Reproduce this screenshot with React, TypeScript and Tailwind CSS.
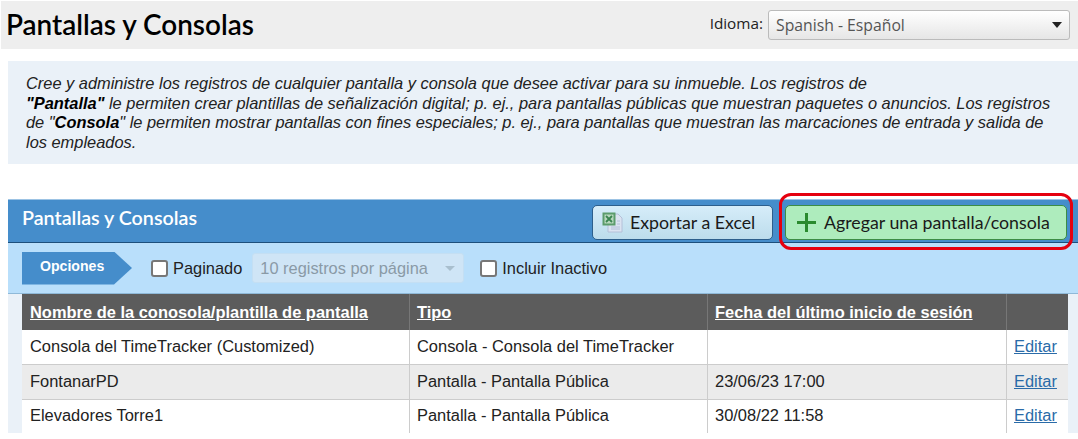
import React from 'react';

const rows = [
   { name: 'Consola del TimeTracker (Customized)', type: 'Consola - Consola del TimeTracker', date: '', h: 'h-[35px] border-b', bg: 'bg-white' },
   { name: 'FontanarPD', type: 'Pantalla - Pantalla Pública', date: '23/06/23 17:00', h: 'h-[35px] border-b', bg: 'bg-[#ebebeb]' },
   { name: 'Elevadores Torre1', type: 'Pantalla - Pantalla Pública', date: '30/08/22 11:58', h: 'h-[33px]', bg: 'bg-white' },
];

const ExcelIcon = () => (
   <svg width="21" height="22" viewBox="0 0 21 22">
      <path d="M6 3h10l4 4v14H6z" fill="#dbe3f1" stroke="#b4c0d8" />
      <path d="M0.5 1.5h13v13h-13z" fill="#5c9c6c" />
      <path d="M2.5 3.5h9v9h-9z" fill="#b9d8bf" />
      <path d="M4 5l6 6M10 5l-6 6" stroke="#3a8550" strokeWidth="1.8" />
      <path d="M15 10h3M15 13h3M9 16h9M9 18h9" stroke="#b4c0d8" />
   </svg>
);

const App = () => {
   return (
      <div className="relative w-[1078px] h-[439px] overflow-hidden bg-white pt-px font-['Liberation_Sans',sans-serif] text-black">
         <div className="ml-px flex items-center justify-between h-[48px] bg-[#eeeeee] pl-[5px] pr-[8px]">
            <h1 className="font-['Lato',sans-serif] font-semibold text-[27.9px] leading-none text-black">Pantallas y Consolas</h1>
            <div className="flex items-center gap-[5px]">
               <span className="font-['Open_Sans',sans-serif] text-[15.3px] text-[#222] -mt-[3px]">Idioma:</span>
               <div className="flex items-center justify-between w-[302px] h-[30px] pl-[7px] pr-[7px] rounded-[3px] border border-[#bbbbbb] bg-gradient-to-b from-white to-[#e6e6e6]">
                  <span className="font-['Open_Sans',sans-serif] text-[15.75px] text-[#555] mt-[2px]">Spanish - Español</span>
                  <span className="w-0 h-0 border-x-[5px] border-x-transparent border-t-[6px] border-t-[#222]" />
               </div>
            </div>
         </div>

         <div className="ml-[8px] mt-[12px] h-[103px] bg-[#eaf1f8] pl-[18px] pr-[20px] pt-[13px] italic text-[16.4px] leading-[19.5px] text-[#222]">
            Cree y administre los registros de cualquier pantalla y consola que desee activar para su inmueble. Los registros de
            <br />
            <b className="text-black">"Pantalla"</b> le permiten crear plantillas de señalización digital; p. ej., para pantallas públicas que muestran paquetes o anuncios. Los registros
            <br />
            de "<b className="text-black">Consola</b>" le permiten mostrar pantallas con fines especiales; p. ej., para pantallas que muestran las marcaciones de entrada y salida de
            <br />
            los empleados.
         </div>

         <div className="ml-[8px] mt-[35px]">
            <div className="flex items-center justify-between h-[44px] bg-[#458dcb] border-t border-[#9cc3e4] border-b border-b-[#1c4f7c] pl-[14px] pr-[11px]">
               <h2 className="font-['Lato',sans-serif] font-semibold text-[19.7px] text-white -mt-[6px]">Pantallas y Consolas</h2>
               <div className="flex items-center gap-[12px] mt-[2px] font-['Lato',sans-serif] text-[17.75px] text-[#1a1a1a]">
                  <button className="flex items-center gap-[7px] w-[181px] h-[35px] pl-[9px] rounded-[5px] border border-[#2d5f8c] bg-gradient-to-b from-[#d6edf9] to-[#bcdcec]">
                     <ExcelIcon />
                     Exportar a Excel
                  </button>
                  <button className="flex items-center gap-[8px] w-[282px] h-[35px] pl-[11px] rounded-[5px] border border-[#3d8c45] bg-[#aeecbd]">
                     <svg width="19" height="19" viewBox="0 0 19 19">
                        <path d="M9.5 0v19M0 9.5h19" stroke="#2a8a2e" strokeWidth="3" />
                     </svg>
                     Agregar una pantalla/consola
                  </button>
               </div>
            </div>

            <div className="flex items-center h-[51px] bg-[#b9dffb] border-b border-[#8fb9d8] pl-[14px] text-[16.4px] text-[#222]">
               <div className="flex items-center h-[33px] w-[110px] pl-[18px] pb-[2px] bg-[#458dcb] text-white font-bold text-[14.1px] [clip-path:polygon(0_0,92px_0,110px_50%,92px_100%,0_100%)]">
                  Opciones
               </div>
               <span className="ml-[19px] w-[17px] h-[17px] rounded-[3px] border-2 border-[#777] bg-white" />
               <span className="ml-[5px]">Paginado</span>
               <div className="ml-[10px] flex items-center justify-between w-[212px] h-[30px] pl-[7px] pr-[8px] rounded-[3px] bg-[#cfe5f6] border border-[#c4dff3] text-[#8a9aa6]">
                  10 registros por página
                  <span className="w-0 h-0 border-x-[5px] border-x-transparent border-t-[5px] border-t-[#a9bfce]" />
               </div>
               <span className="ml-[16px] w-[17px] h-[17px] rounded-[3px] border-2 border-[#777] bg-white" />
               <span className="ml-[5px]">Incluir Inactivo</span>
            </div>

            <div className="bg-[#eaf1f8] pl-[14px] pr-[10px]">
               <div className="grid grid-cols-[388px_298px_299px_61px] h-[36px] bg-[#5c5c5c] text-white font-bold text-[16.45px]">
                  <div className="flex items-center pl-[8px] border-r border-[#777]"><span className="underline">Nombre de la conosola/plantilla de pantalla</span></div>
                  <div className="flex items-center pl-[7px] border-r border-[#777]"><span className="underline">Tipo</span></div>
                  <div className="flex items-center pl-[7px] border-r border-[#777]"><span className="underline">Fecha del último inicio de sesión</span></div>
                  <div />
               </div>
               {rows.map((row) => (
                  <div key={row.name} className={`grid grid-cols-[388px_298px_299px_61px] ${row.h} ${row.bg} border-[#cccccc] text-[16.45px] text-[#222]`}>
                     <div className="flex items-center pl-[8px] pb-[2px] border-r border-[#cccccc]">{row.name}</div>
                     <div className="flex items-center pl-[7px] pb-[2px] border-r border-[#cccccc]">{row.type}</div>
                     <div className="flex items-center pl-[7px] pb-[2px] border-r border-[#cccccc]">{row.date}</div>
                     <div className="flex items-center pl-[7px] pb-[2px]"><a className="underline text-[#2a6ba8]">Editar</a></div>
                  </div>
               ))}
            </div>
         </div>

         <div className="absolute left-[779px] top-[193px] w-[294px] h-[57px] rounded-[12px] border-[3px] border-[#e5000f]" />
      </div>
   );
};

export default App;
